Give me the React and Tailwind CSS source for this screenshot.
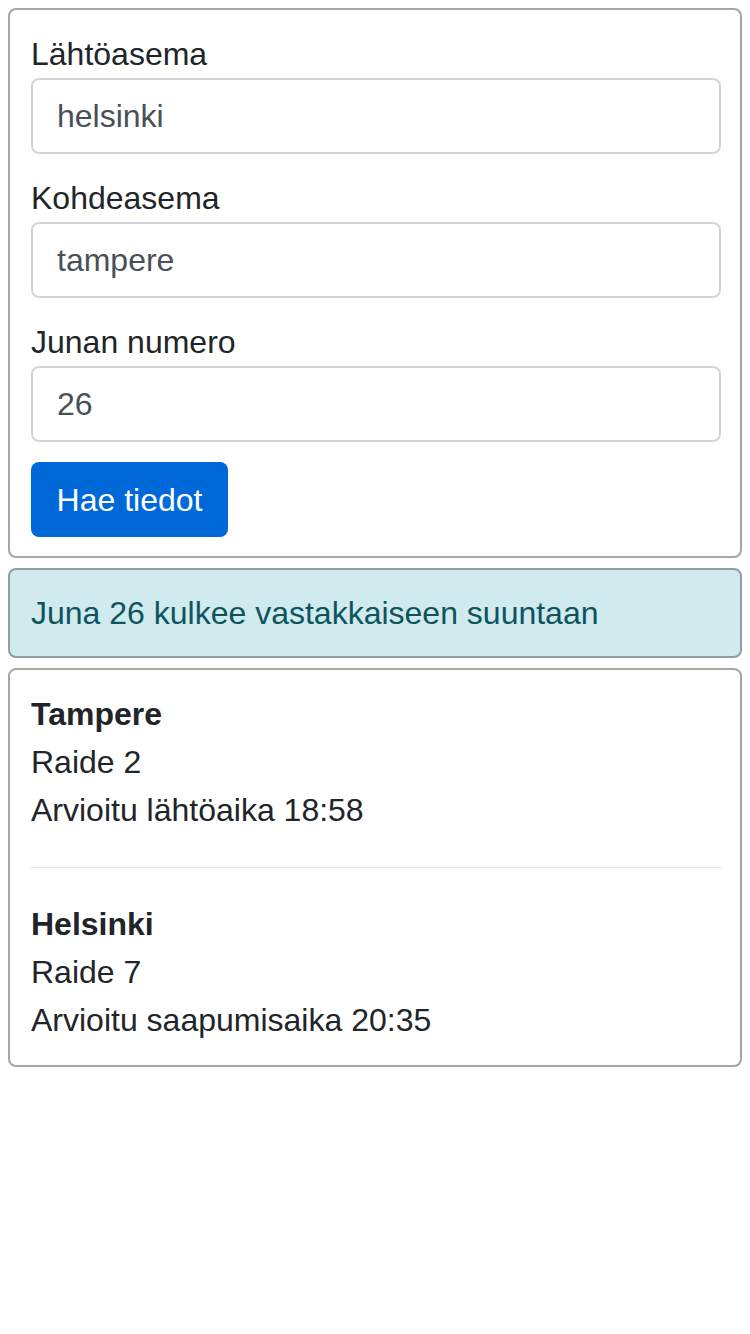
export default function App() {
  const font = { fontFamily: '"Liberation Sans", Arial, sans-serif' };

  return (
    <div className="min-h-[1334px] bg-white p-[8px] text-[32px] leading-[48px] text-[#212529]" style={font}>
      <div className="rounded-[8px] border-2 border-[#a6a6a6] pl-[21px] pr-[19px] pt-[20px] pb-[19px]">
        <label className="block">Lähtöasema</label>
        <input
          className="mb-[20px] block h-[76px] w-full rounded-[8px] border-2 border-[#d0d5db] px-[24px] text-[#495057] outline-none"
          defaultValue="helsinki"
        />
        <label className="block">Kohdeasema</label>
        <input
          className="mb-[20px] block h-[76px] w-full rounded-[8px] border-2 border-[#d0d5db] px-[24px] text-[#495057] outline-none"
          defaultValue="tampere"
        />
        <label className="block">Junan numero</label>
        <input
          className="mb-[20px] block h-[76px] w-full rounded-[8px] border-2 border-[#d0d5db] px-[24px] text-[#495057] outline-none"
          defaultValue="26"
        />
        <button className="h-[75px] w-[197px] rounded-[8px] bg-[#0069d9] text-white">
          Hae tiedot
        </button>
      </div>

      <div className="mt-[10px] rounded-[8px] border-2 border-[#8e9ea2] bg-[#d1eaee] px-[21px] py-[19px] text-[#0c5460]">
        Juna 26 kulkee vastakkaiseen suuntaan
      </div>

      <div className="mt-[10px] rounded-[8px] border-2 border-[#a6a6a6] pl-[21px] pr-[19px] pt-[20px] pb-[21px]">
        <div className="font-bold">Tampere</div>
        <div>Raide 2</div>
        <div>Arvioitu lähtöaika 18:58</div>
        <hr className="mt-[33px] mb-[32px] border-t-[1px] border-[#e2e2e2]" />
        <div className="font-bold">Helsinki</div>
        <div>Raide 7</div>
        <div>Arvioitu saapumisaika 20:35</div>
      </div>
    </div>
  );
}
